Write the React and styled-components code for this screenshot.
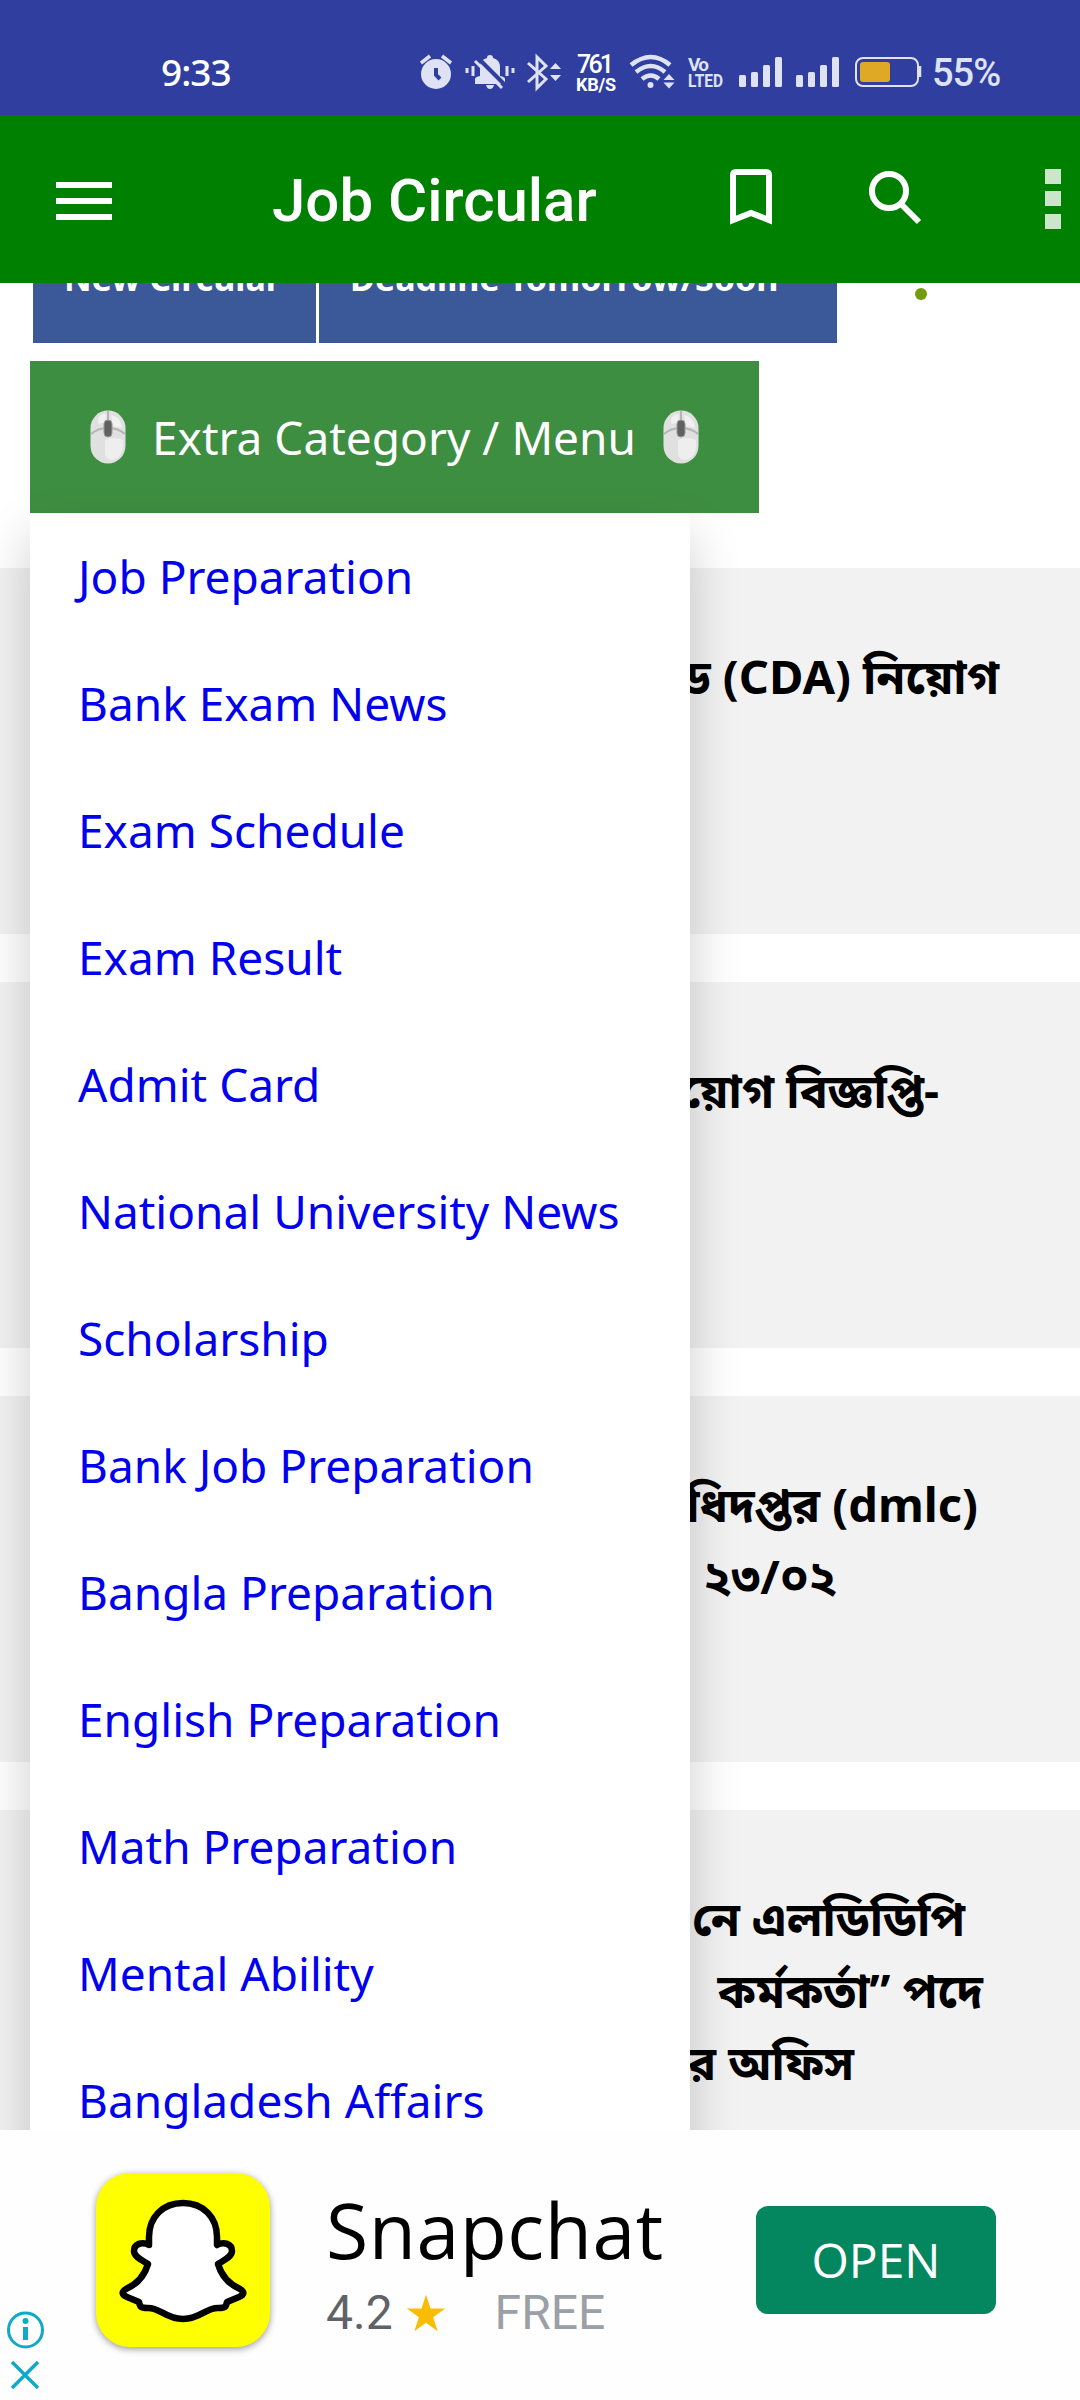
import React from "react";
import styled, { createGlobalStyle } from "styled-components";

const Global = createGlobalStyle`
  *{box-sizing:border-box}
  body{margin:0;background:#fff;font-family:"Noto Sans","Noto Sans Bengali",sans-serif}
`;

const Screen = styled.div`
  width:1080px;height:2400px;display:flex;flex-direction:column;overflow:hidden;background:#fff;
`;
const StatusBar = styled.div`
  height:115px;flex:none;background:#303f9f;color:#dfe2f3;position:relative;
  display:flex;padding:50px 0 0 161px;font-family:Roboto,sans-serif;
`;
const Clock = styled.div`
  width:259px;color:#fff;font:500 37px/44px "Noto Sans",sans-serif;letter-spacing:-1px;
`;
const StatusIcons = styled.svg`width:512px;height:44px;flex:none;`;
const Battery = styled.div`font:500 38px/46px Roboto,sans-serif;letter-spacing:-1px;`;
const AppBar = styled.header`
  height:168px;flex:none;background:#008000;display:flex;align-items:center;
`;
const MenuIcon = styled.svg`width:56px;height:40px;margin:0 160px 0 56px;margin-top:4px;`;
const AppTitle = styled.h1`
  margin:0;padding-top:3px;width:455px;color:#fff;font:500 60px/70px Roboto,sans-serif;white-space:nowrap;
`;
const BarIcon = styled.svg`width:${p => p.$w}px;height:62px;margin-right:${p => p.$gap || 0}px;`;
const Page = styled.main`height:1847px;flex:none;overflow:hidden;`;
const Tabs = styled.nav`height:60px;display:flex;gap:3px;padding-left:33px;align-items:flex-start;`;
const Tab = styled.div`
  width:${p => p.$w}px;height:60px;background:#3b5998;color:#fff;padding-left:${p => p.$pad}px;
  overflow:hidden;font:700 34px/40px "Noto Sans",sans-serif;white-space:nowrap;
  letter-spacing:${p => p.$ls}px;
  & > span{display:block;margin-top:-25px;height:60px}
`;
const Dot = styled.div`width:12px;height:12px;border-radius:50%;background:#729b0e;margin:5px 0 0 75px;`;
const Dropdown = styled.div`position:relative;margin:18px 0 0 30px;width:729px;height:152px;`;
const DropButton = styled.button`
  width:729px;height:152px;border:0;border-radius:0;background:#3e8e41;color:#fff;padding:0 0 0 60px;
  display:flex;align-items:center;gap:26px;font:400 46px/60px "Noto Sans",sans-serif;text-align:left;
`;
const Label = styled.span`white-space:nowrap;width:485px;letter-spacing:${p => p.$ls}px;`;
const Mouse = styled.svg`width:36px;height:54px;flex:none;`;
const DropMenu = styled.div`
  position:absolute;left:0;top:152px;width:660px;background:#fff;z-index:1;
  box-shadow:0 24px 48px rgba(0,0,0,.2);
`;
const MenuLink = styled.a`
  display:block;height:127px;padding:32px 0 0 48px;color:#0000ee;white-space:nowrap;
  font:400 46px/62px "Noto Sans",sans-serif;letter-spacing:${p => p.$ls}px;
`;
const Cards = styled.section`display:flex;flex-direction:column;gap:48px;margin-top:55px;`;
const Card = styled.article`height:366px;flex:none;background:#f2f2f2;padding-top:72px;`;
const Line = styled.div`
  height:72px;line-height:72px;font-size:47px;font-weight:700;color:#000;text-align:right;
  padding-right:${p => 1080 - p.$end}px;white-space:nowrap;letter-spacing:${p => p.$ls || 0}px;
`;
const Ad = styled.footer`height:270px;flex:none;display:flex;background:#fefefe;`;
const AdChoices = styled.svg`width:96px;height:270px;flex:none;`;
const AppIcon = styled.div`
  width:174px;height:174px;margin-top:43px;border-radius:34px;background:#ffff00;flex:none;
  box-shadow:0 2px 7px rgba(0,0,0,.4);
`;
const Ghost = styled.svg`display:block;width:174px;height:174px;`;
const AdInfo = styled.div`width:430px;margin-left:56px;padding-top:56px;`;
const AdTitle = styled.div`font:400 77px/88px "Open Sans",sans-serif;letter-spacing:.5px;color:#000;white-space:nowrap;`;
const AdMeta = styled.div`display:flex;align-items:center;font:400 48px/60px Roboto,sans-serif;color:#5f6368;margin-top:9px;`;
const Star = styled.svg`width:40px;height:40px;margin:0 49px 0 13px;`;
const Free = styled.span`color:#9aa0a6;`;
const OpenButton = styled.button`
  width:240px;height:108px;margin-top:76px;border:0;border-radius:12px;background:#04875f;color:#fff;
  font:400 48px/108px "Open Sans",sans-serif;padding:0;
`;

const items = [
  ["Job Preparation", 0], ["Bank Exam News", 0], ["Exam Schedule", 0], ["Exam Result", 0],
  ["Admit Card", 0], ["National University News", 0], ["Scholarship", 0],
  ["Bank Job Preparation", 0], ["Bangla Preparation", 0], ["English Preparation", 0],
  ["Math Preparation", 0], ["Mental Ability", 0], ["Bangladesh Affairs", 0],
];
const posts = [
  [["ড (CDA) নিয়োগ", 999]],
  [["নিয়োগ বিজ্ঞপ্তি-", 939]],
  [["অধিদপ্তর (dmlc)", 978], ["২৩/০২", 837]],
  [["নে এলডিডিপি", 965], ["কর্মকর্তা” পদে", 983], ["র অফিস", 854]],
];

const MouseIcon = () => (
  <Mouse viewBox="0 0 36 54">
    <rect x=".5" y=".5" width="35" height="53" rx="17.5" fill="#e0e0e0" />
    <path d="M15 30q8-4 18 0v5q0 13-11 15-7 0-7-8z" fill="#eee" />
    <path d="M9 7q5-5 7-2l-1 7-6 2q-2-3 0-7zM21 5q9 1 11 13l-9-2z" fill="#f1f1f1" />
    <path d="M1 24q7-6 17-6t17 6M18 1v12" fill="none" stroke="#b5b5b5" strokeWidth="2" />
    <rect x="14" y="10" width="8" height="17" rx="4" fill="#616161" stroke="#999" />
  </Mouse>
);

const bars = x => [[0, 75], [12, 72], [24, 65], [36, 57]].map(([d, y]) => (
  <rect key={x + d} x={x + d} y={y} width="7" height={87 - y} rx="1.5" />
));

export default function App() {
  return (
    <Screen>
      <Global />
      <StatusBar>
        <Clock>9:33</Clock>
        <StatusIcons viewBox="420 50 512 44" fill="#dfe2f3">
          <circle cx="436" cy="74" r="15" />
          <path d="M421 63l9-7M451 63l-9-7" stroke="#dfe2f3" strokeWidth="3.5" />
          <path d="M436 68v7l4 4" fill="none" stroke="#303f9f" strokeWidth="4" />
          <path d="M475 84v-5q0-2 5-3V67q0-7 7-9 0-3 3-3t3 3q7 2 7 9v9q5 1 5 3v5zM486 85h8q-1 4-4 4t-4-4z" />
          <path d="M478 58l28 28" stroke="#303f9f" strokeWidth="4" />
          <path d="M475 61l27 27" stroke="#dfe2f3" strokeWidth="3" />
          <path d="M467 68v5M473 66v10M507 66v10M513 68v5" stroke="#dfe2f3" strokeWidth="3" />
          <path d="M528 63l18 16-9 9V57l9 9-18 16" fill="none" stroke="#dfe2f3" strokeWidth="3" />
          <path d="M550 69l5.500-6 5.500 6zM550 75l5.500 6 5.500-6z" />
          <text x="577" y="73" fill="#fff" fontFamily="Roboto" fontWeight="500" fontSize="25" textLength="37">761</text>
          <text x="576" y="91" fill="#fff" fontFamily="Roboto" fontWeight="700" fontSize="18" textLength="40">KB/S</text>
          <path d="M631 65q20-16 39 0M636 72q15-12 29 0M642 79q9-7 17 0" fill="none" stroke="#dfe2f3" strokeWidth="4.500" />
          <circle cx="650.500" cy="85" r="3" />
          <path d="M663.500 80l5.500-6 5.500 6zM663.500 82.500l5.500 6 5.500-6z" />
          <text x="688" y="71" fontFamily="Roboto" fontWeight="700" fontSize="19" textLength="21">Vo</text>
          <text x="688" y="87" fontFamily="Roboto" fontWeight="700" fontSize="19" textLength="35" lengthAdjust="spacingAndGlyphs">LTED</text>
          {bars(739)}{bars(796)}
          <rect x="856" y="58" width="62" height="28" rx="7" fill="none" stroke="#dfe2f3" strokeWidth="2" />
          <rect x="860" y="62" width="30" height="20" rx="3" fill="#dfa825" />
          <path d="M920 66v11" stroke="#dfe2f3" strokeWidth="2.500" />
        </StatusIcons>
        <Battery>55%</Battery>
      </StatusBar>
      <AppBar>
        <MenuIcon viewBox="0 0 56 40" fill="#fff"><path d="M0 1h56v6H0zM0 17h56v6H0zM0 33h56v6H0z" /></MenuIcon>
        <AppTitle>Job Circular</AppTitle>
        <BarIcon $w={48} $gap={92} viewBox="0 0 48 62"><path d="M6 52V7q0-3 3-3h30q3 0 3 3v45l-18-7z" fill="none" stroke="#fff" strokeWidth="6" /></BarIcon>
        <BarIcon $w={56} $gap={122} viewBox="0 0 56 62"><circle cx="22" cy="23" r="17" fill="none" stroke="#fff" strokeWidth="6" /><path d="M34 36l18 18" stroke="#fff" strokeWidth="6" /></BarIcon>
        <BarIcon $w={16} viewBox="0 0 16 62" fill="#cce6cc"><path d="M0 1h16v15H0zM0 23h16v15H0zM0 46h16v15H0z" /></BarIcon>
      </AppBar>
      <Page>
        <Tabs>
          <Tab $w={283} $pad={31}><span>New Circular</span></Tab>
          <Tab $w={518} $pad={31}><span>Deadline Tomorrow/Soon</span></Tab>
          <Dot />
        </Tabs>
        <Dropdown>
          <DropButton><MouseIcon /><Label>Extra Category / Menu</Label><MouseIcon /></DropButton>
          <DropMenu>{items.map(([t, ls]) => <MenuLink key={t} $ls={ls}>{t}</MenuLink>)}</DropMenu>
        </Dropdown>
        <Cards>
          {posts.map((lines, i) => (
            <Card key={i}>{lines.map(([t, end]) => <Line key={t} $end={end}>{t}</Line>)}</Card>
          ))}
        </Cards>
      </Page>
      <Ad>
        <AdChoices viewBox="0 0 96 270" fill="none" stroke="#11a9c8" strokeWidth="3">
          <circle cx="25.500" cy="200" r="17" />
          <path d="M25.500 197v13" strokeWidth="5" /><circle cx="25.500" cy="191" r="3" fill="#11a9c8" stroke="none" />
          <path d="M12 232l26 26M38 232l-26 26" strokeWidth="3.500" />
        </AdChoices>
        <AppIcon>
          <Ghost viewBox="96 2173 174 174">
            <path d="M183 2203c-20 0-34 14-34 34v8c-7-4-15-1-15 6 0 6 8 9 14 13-4 14-13 21-22 25-5 3-4 6 1 8l12 5c1 5 2 6 8 6 13-1 18 11 36 11s23-12 36-11c6 0 7-1 8-6l12-5c5-2 6-5 1-8-9-4-18-11-22-25 6-4 14-7 14-13 0-7-8-10-15-6v-8c0-20-14-34-34-34z" fill="#fff" stroke="#000" strokeWidth="6.500" strokeLinejoin="round" />
          </Ghost>
        </AppIcon>
        <AdInfo>
          <AdTitle>Snapchat</AdTitle>
          <AdMeta>4.2<Star viewBox="0 0 24 24"><path d="M12 17.900 19 23l-2.700-8.500L23.500 9.300h-8.800L12 1 9.300 9.300H.5l7.200 5.200L5 23z" fill="#fbbc04" /></Star><Free>FREE</Free></AdMeta>
        </AdInfo>
        <OpenButton>OPEN</OpenButton>
      </Ad>
    </Screen>
  );
}
